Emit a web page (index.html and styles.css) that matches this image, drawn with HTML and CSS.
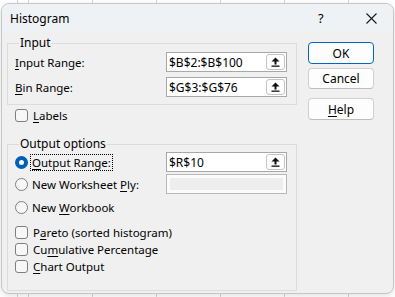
FILE: index.html
```html
<!DOCTYPE html>
<html lang="en">
<head>
  <meta charset="UTF-8" />
  <title>Histogram</title>
  <link rel="stylesheet" href="styles.css">
</head>
<body>
  <div class="dialog">
    <div class="titlebar">
      <span class="title">Histogram</span>
      <span class="qmark">?</span>
      <span class="close">
        <svg width="11" height="11" viewBox="0 0 11 11"><path d="M0.5 0.5 L10.5 10.5 M10.5 0.5 L0.5 10.5" stroke="#1a1a1a" stroke-width="1.1" fill="none"/></svg>
      </span>
    </div>

    <div class="content">
      <div class="main">
        <fieldset class="group group-input">
          <legend>Input</legend>
          <div class="row">
            <span class="lbl"><u>I</u>nput Range:</span>
            <div class="ref">
              <span class="ref-text">$B$2:$B$100</span>
              <span class="ref-btn"><svg width="9" height="10" viewBox="0 0 9 10"><path d="M4.5 0.5 L8.5 4.5 L5.5 4.5 L5.5 7.5 L3.5 7.5 L3.5 4.5 L0.5 4.5 Z" fill="#111"/><rect x="0.5" y="8.5" width="8" height="1.3" fill="#111"/></svg></span>
            </div>
          </div>
          <div class="row row-2">
            <span class="lbl"><u>B</u>in Range:</span>
            <div class="ref">
              <span class="ref-text">$G$3:$G$76</span>
              <span class="ref-btn"><svg width="9" height="10" viewBox="0 0 9 10"><path d="M4.5 0.5 L8.5 4.5 L5.5 4.5 L5.5 7.5 L3.5 7.5 L3.5 4.5 L0.5 4.5 Z" fill="#111"/><rect x="0.5" y="8.5" width="8" height="1.3" fill="#111"/></svg></span>
            </div>
          </div>
        </fieldset>

        <div class="check check-labels"><span class="box"></span><span><u>L</u>abels</span></div>

        <fieldset class="group group-output">
          <legend>Output options</legend>
          <div class="row">
            <div class="opt"><span class="radio on"></span><span class="focus"><u>O</u>utput Range:</span></div>
            <div class="ref">
              <span class="ref-text">$R$10</span>
              <span class="ref-btn"><svg width="9" height="10" viewBox="0 0 9 10"><path d="M4.5 0.5 L8.5 4.5 L5.5 4.5 L5.5 7.5 L3.5 7.5 L3.5 4.5 L0.5 4.5 Z" fill="#111"/><rect x="0.5" y="8.5" width="8" height="1.3" fill="#111"/></svg></span>
            </div>
          </div>
          <div class="row row-ply">
            <div class="opt"><span class="radio"></span><span class="txt">New Worksheet <u>P</u>ly:</span></div>
            <div class="ref disabled"><span class="inner"></span></div>
          </div>
          <div class="opt opt-book"><span class="radio"></span><span class="txt">New <u>W</u>orkbook</span></div>

          <div class="check check-pareto"><span class="box"></span><span>P<u>a</u>reto (sorted histogram)</span></div>
          <div class="check"><span class="box"></span><span>Cu<u>m</u>ulative Percentage</span></div>
          <div class="check"><span class="box"></span><span><u>C</u>hart Output</span></div>
        </fieldset>
      </div>

      <div class="buttons">
        <button class="btn default">OK</button>
        <button class="btn">Cancel</button>
        <button class="btn btn-help"><u>H</u>elp</button>
      </div>
    </div>
  </div>
</body>
</html>
```

FILE: styles.css
```css
* { box-sizing: border-box; }
body {
  margin: 0;
  height: 297px;
  overflow: hidden;
  font-family: "Noto Sans", "DejaVu Sans", sans-serif;
  font-size: 11.5px;
  color: #000;
  background-color: #fff;
  background-image: repeating-linear-gradient(90deg, #d6d6d6 0 1px, transparent 1px 64px);
  background-position: 28px 0;
}
u { text-decoration-thickness: 1px; text-underline-offset: 2px; }

.dialog {
  margin: 3px 0 0 1px;
  width: 393px;
  height: 291px;
  border: 1px solid #c6c6c6;
  border-radius: 8px;
  background: #f0f0f0;
  overflow: hidden;
  box-shadow: 0 2px 6px rgba(0,0,0,0.12);
}
.titlebar {
  height: 28px;
  display: flex;
  align-items: center;
  background: #eff2f5;
  padding-left: 8px;
}
.title { font-size: 12px; flex: 1; }
.qmark { font-size: 13px; width: 12px; margin-right: 36px; }
.close { width: 11px; height: 11px; margin-right: 16px; display: flex; }

.content {
  display: flex;
  padding: 4px 0 0 5px;
}
.main { width: 290px; }

.group {
  margin: 0;
  border: 1px solid #dcdcdc;
  padding: 0 9px 0 7px;
}
.group legend {
  padding: 0 1px;
  margin-left: 4px;
  line-height: 14px;
  font-size: 12px;
}
.group-input { padding-top: 2px; padding-bottom: 7px; }
.group-output { margin-top: 14px; padding-top: 1px; padding-bottom: 15px; }

.row {
  display: flex;
  align-items: center;
  justify-content: space-between;
  height: 20px;
}
.row-2 { margin-top: 5px; }
.row-ply { margin-top: 2px; }

.ref {
  width: 121px;
  height: 20px;
  border: 1px solid #a8a8a8;
  background: #fff;
  display: flex;
  align-items: center;
  justify-content: space-between;
  padding: 0 1px 0 2px;
}
.ref-text { font-size: 12px; }
.ref-btn {
  width: 19px;
  height: 16px;
  border: 1px solid #c4c4c4;
  border-radius: 3px;
  background: #fdfdfd;
  display: flex;
  align-items: center;
  justify-content: center;
}
.ref.disabled { border-color: #b8b8b8; padding: 3px; background: #fbfbfb; }
.ref.disabled .inner { display: block; width: 100%; height: 100%; background: #ededed; }

.opt {
  display: flex;
  align-items: center;
  gap: 5px;
  height: 20px;
}
.opt-book { margin-top: 3px; }
.radio {
  width: 13px;
  height: 13px;
  border-radius: 50%;
  border: 1px solid #7f7f7f;
  background: #f7f7f7;
  flex: none;
}
.radio.on {
  border: 4px solid #005fb8;
  background: #fff;
}
.focus {
  outline: 1px dotted #000;
  padding: 0 1px;
  line-height: 15px;
  margin-left: -2px;
}
.txt { margin-left: -1px; }

.check {
  display: flex;
  align-items: center;
  gap: 5px;
  height: 17px;
}
.check .box {
  width: 13px;
  height: 13px;
  border: 1px solid #7f7f7f;
  border-radius: 3px;
  background: #f7f7f7;
  flex: none;
}
.check-labels { margin: 3px 0 0 8px; height: 15px; }
.check-pareto { margin-top: 7px; }

.buttons {
  display: flex;
  flex-direction: column;
  margin: 6px 0 0 11px;
}
.btn {
  width: 66px;
  height: 21px;
  border: 1px solid #d0d0d0;
  border-bottom-color: #bcbcbc;
  border-radius: 4px;
  background: #fdfdfd;
  font-family: inherit;
  font-size: 12px;
  padding: 0;
  margin-bottom: 4px;
  color: #000;
}
.btn.default { border: 1px solid #0067c0; height: 22px; }
.btn-help { margin-top: 5px; height: 22px; }
```
